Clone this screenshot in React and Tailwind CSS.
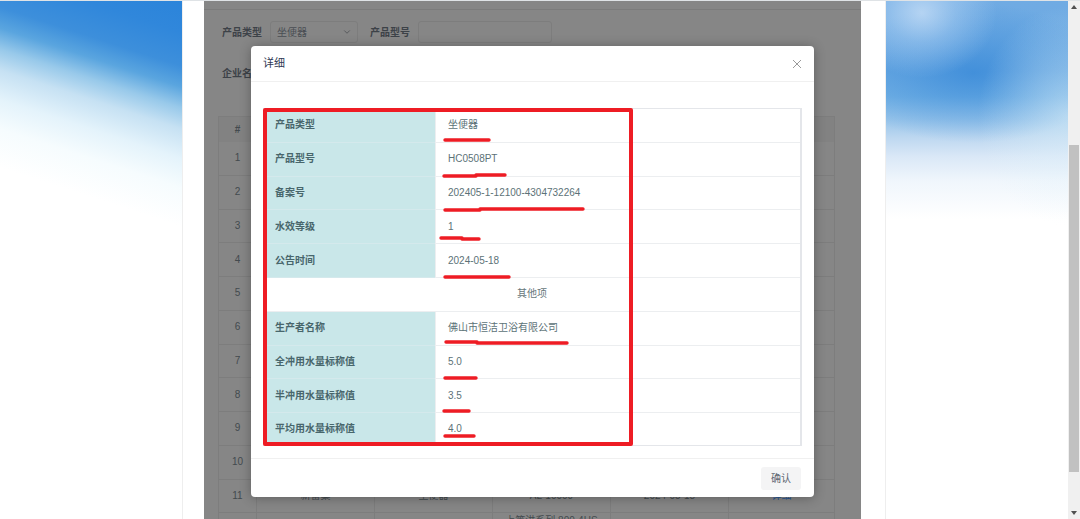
import { ChevronDown } from "lucide-react";

const fields = [
  { label: "产品类型", value: "坐便器" },
  { label: "产品型号", value: "HC0508PT" },
  { label: "备案号", value: "202405-1-12100-4304732264" },
  { label: "水效等级", value: "1" },
  { label: "公告时间", value: "2024-05-18" },
  { section: "其他项" },
  { label: "生产者名称", value: "佛山市恒洁卫浴有限公司" },
  { label: "全冲用水量标称值", value: "5.0" },
  { label: "半冲用水量标称值", value: "3.5" },
  { label: "平均用水量标称值", value: "4.0" },
];

const products = [
  ...Array.from({ length: 10 }, (_, i) => ({ id: i + 1 })),
  { id: 11, brand: "新番巢", type: "坐便器", model: "AL-10009", date: "2024-05-18", link: "详细" },
];

const marks = [
  "M182 32H226",
  "M181 68H213M213 67H242",
  "M182 102H217M217 101H287M287 101H320",
  "M178 130H199M199 131H216",
  "M182 169H246",
  "M183 234H214M214 235H275M275 235H304",
  "M182 270H213",
  "M181 303H206",
  "M182 328H211",
];

function Marks() {
  return (
    <svg className="pointer-events-none absolute left-0 top-0 overflow-visible" width="540" height="340" fill="none" stroke="#ee1c24" aria-hidden="true">
      <rect x="2" y="2" width="366" height="334" strokeWidth="4" strokeLinejoin="round" />
      {marks.map((d) => (
        <path key={d} d={d} strokeWidth="3.4" strokeLinecap="round" />
      ))}
    </svg>
  );
}

function DetailDialog() {
  return (
    <div role="dialog" aria-labelledby="dialog-title" className="absolute inset-x-[47px] top-[45px] rounded bg-white shadow-[0_1px_12px_rgba(0,0,0,0.3)]">
      <header className="flex h-9 items-center justify-between border-b border-[#f0f0f0] px-3">
        <h2 id="dialog-title" className="text-[11px] text-[#2f3854]">详细</h2>
        <button type="button" aria-label="关闭" className="text-[#9a9a9a]">
          <svg width="10" height="10" viewBox="0 0 10 10" fill="none" stroke="currentColor" aria-hidden="true">
            <path d="M1 1L9 9M9 1L1 9" />
          </svg>
        </button>
      </header>
      <div className="px-3 pb-3 pt-[26px]">
        <div className="relative">
          <table className="h-[338px] w-full table-fixed border-separate border-spacing-0 border-b border-l border-r-2 border-t border-[#e4e6ea] text-[10px] leading-4">
            <colgroup>
              <col className="w-[171px]" />
              <col />
            </colgroup>
            <tbody>
              {fields.map((f, i) => {
                const line = i < fields.length - 1 ? "border-b border-b-[#eceef0]" : "";
                const labelLine = i < fields.length - 1 ? "border-b border-b-[#d4e9ec]" : "";
                return f.section ? (
                  <tr key={f.section}>
                    <td colSpan={2} className={`text-center text-[#67777b] ${line}`}>{f.section}</td>
                  </tr>
                ) : (
                  <tr key={f.label}>
                    <th scope="row" className={`bg-[#c9e7e9] pl-[11px] text-left font-bold text-[#48666c] ${labelLine}`}>{f.label}</th>
                    <td className={`border-l border-l-[#eceef0] pl-3 text-[#5c7277] ${line}`}>{f.value}</td>
                  </tr>
                );
              })}
            </tbody>
          </table>
          <Marks />
        </div>
      </div>
      <footer className="flex h-[39px] items-center justify-end border-t border-[#f0f0f0] px-[13px]">
        <button type="button" className="h-[23px] w-10 rounded-[3px] bg-[#f4f4f5] text-[10px] text-[#606672]">确认</button>
      </footer>
    </div>
  );
}

function ProductTable() {
  const cell = "border-b border-r border-[#7d7d7d] text-center";
  return (
    <table className="h-[431px] w-full table-fixed border-separate border-spacing-0 border-l border-t border-[#7d7d7d] text-[10px] leading-4 text-[#434a4e]">
      <colgroup>
        <col className="w-[38px]" />
        <col />
        <col />
        <col />
        <col />
        <col className="w-[106px]" />
      </colgroup>
      <thead>
        <tr className="h-[25px] bg-[#828282]">
          <th scope="col" className="border-r border-[#7d7d7d]">#</th>
          <th className="border-r border-[#7d7d7d]" colSpan={5}></th>
        </tr>
      </thead>
      <tbody>
        {products.map((p) => (
          <tr key={p.id} className="h-[33px]">
            <td className={cell}>{p.id}</td>
            <td className={cell}>{p.brand}</td>
            <td className={cell}>{p.type}</td>
            <td className={cell}>{p.model}</td>
            <td className={cell}>{p.date}</td>
            <td className={cell}>{p.link && <a href="#detail" className="text-[#285694]">{p.link}</a>}</td>
          </tr>
        ))}
        <tr className="h-[33px]">
          <td className={cell}></td>
          <td className={cell}></td>
          <td className={cell}></td>
          <td className={`${cell} align-top`}>上等洪系列 800-4HS</td>
          <td className={cell}></td>
          <td className={cell}></td>
        </tr>
      </tbody>
    </table>
  );
}

export default function App() {
  return (
    <div className="grid h-screen grid-cols-[182fr_22px_657fr_25px_182fr_12px] overflow-hidden border-t border-[#dfe3e6] bg-white font-['Liberation_Sans','Noto_Sans_CJK_SC',sans-serif]">
      <div className="bg-[linear-gradient(198deg,#2b84da_0px,#3087db_30px,#3d8fdb_62px,#5aa5df_82px,#98c9ea_102px,#c6e1f3_122px,#e4f3fb_150px,#f6fcfe_178px,#ffffff_215px)]" />
      <div className="border-l border-[#eeeeee]" />
      <main className="relative min-w-0 overflow-hidden bg-[#868686]">
        <div className="h-[9px] border-b border-[#7c7c7c]" />
        <form className="px-[18px] text-[10px] font-bold text-[#3d4248]">
          <div className="flex h-11 items-center">
            <label htmlFor="kind">产品类型</label>
            <div className="relative ml-2">
              <select id="kind" defaultValue="坐便器" className="h-[22px] w-[88px] appearance-none rounded-[3px] border border-[#7d7d7d] bg-transparent pl-[6px] font-normal text-[#4a4e54]">
                <option>坐便器</option>
              </select>
              <ChevronDown size={10} className="pointer-events-none absolute right-[6px] top-[6px] text-[#4f5256]" />
            </div>
            <label htmlFor="model" className="ml-3">产品型号</label>
            <input id="model" className="ml-2 h-[22px] w-[134px] rounded-[3px] border border-[#7d7d7d] bg-transparent px-2 font-normal" />
          </div>
          <div className="flex h-[38px] items-center">
            <label htmlFor="company">企业名称</label>
            <input id="company" className="ml-2 h-[22px] w-[134px] rounded-[3px] border border-[#7d7d7d] bg-transparent px-2 font-normal" />
          </div>
        </form>
        <div className="pl-[14px] pr-[26px] pt-6">
          <ProductTable />
        </div>
        <DetailDialog />
      </main>
      <div className="border-r border-[#eeeeee]" />
      <div className="bg-[radial-gradient(ellipse_75px_65px_at_36px_12px,rgba(205,226,248,0.75),rgba(190,218,246,0.4)_45%,rgba(180,212,244,0)),radial-gradient(ellipse_90px_110px_at_100%_115px,rgba(225,243,250,0.5),rgba(225,243,250,0)),radial-gradient(ellipse_135px_70px_at_48%_72px,rgba(45,130,214,0.65),rgba(45,130,214,0.3)_50%,rgba(45,130,214,0)),linear-gradient(180deg,#70abe3_0px,#6aa9e2_70px,#74b2e5_95px,#97c4ea_118px,#bcd7f0_136px,#dae8f7_156px,#f0f6fc_180px,#ffffff_218px)]" />
      <div className="flex flex-col items-center bg-[#f0f0f0]">
        <div className="flex h-[144px] justify-center pt-[4px]">
          <svg width="6" height="4" fill="#505050" aria-hidden="true"><path d="M0 4L3 0L6 4Z" /></svg>
        </div>
        <div className="h-[327px] w-[10px] bg-[#c1c1c1]" />
        <div className="flex flex-1 items-end pb-[4px]">
          <svg width="6" height="4" fill="#505050" aria-hidden="true"><path d="M0 0H6L3 4Z" /></svg>
        </div>
      </div>
    </div>
  );
}
